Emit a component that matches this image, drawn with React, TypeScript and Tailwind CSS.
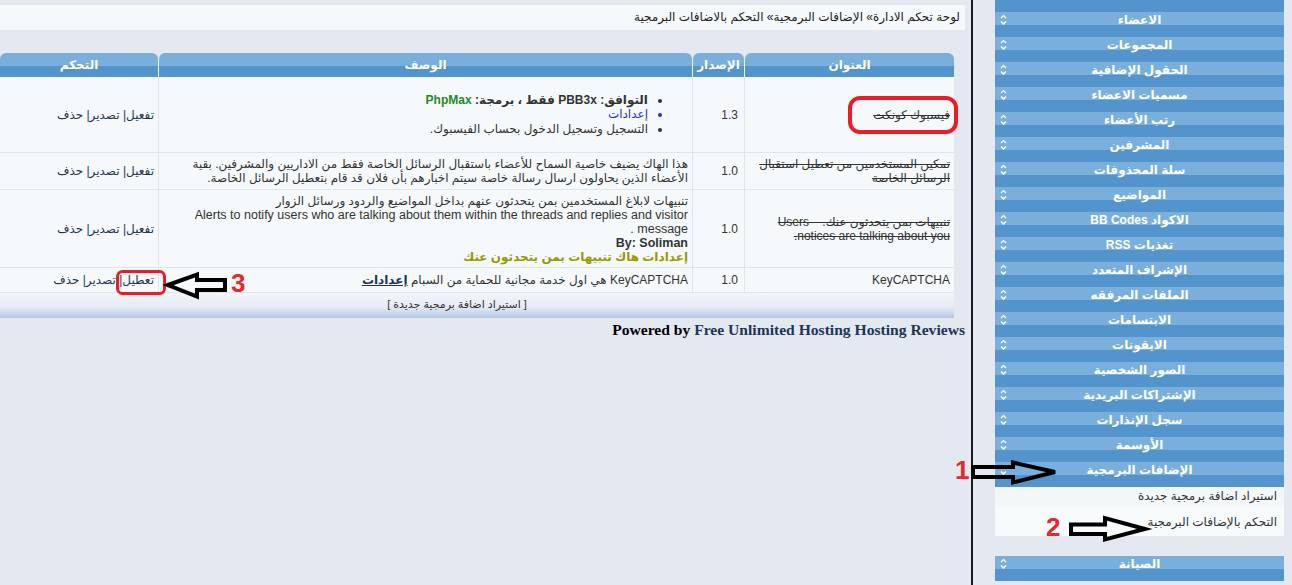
import React from "react";

const Chev = () => (
  <svg width="8" height="12" viewBox="0 0 8 12" className="mt-[2px] shrink-0">
    <path d="M1 4 L3.5 1.5 L6 4" stroke="#fff" strokeWidth="1.1" fill="none" />
    <path d="M1 7.5 L3.5 10 L6 7.5" stroke="#fff" strokeWidth="1.4" fill="none" />
  </svg>
);

const SideItem = ({ label, first }: { label: string; first?: boolean }) => (
  <div
    className={
      "flex h-[25px] bg-[linear-gradient(to_bottom,#7aafdc_0,#7aafdc_13px,#5394cc_13px,#5394cc_100%)] " +
      (first ? "-mt-[13px]" : "")
    }
  >
    <div className="w-[20px] pl-[5px]">
      <Chev />
    </div>
    <div dir="rtl" className="flex-1 pt-[1px] text-center text-[12px] font-bold leading-[14px] text-white">
      {label}
    </div>
    <div className="w-[20px]" />
  </div>
);

const sideItems = [
  "الاعضاء",
  "المجموعات",
  "الحقول الإضافية",
  "مسميات الاعضاء",
  "رتب الأعضاء",
  "المشرفين",
  "سلة المحذوفات",
  "المواضيع",
  "الاكواد BB Codes",
  "تغذيات RSS",
  "الإشراف المتعدد",
  "الملفات المرفقه",
  "الابتسامات",
  "الايقونات",
  "الصور الشخصية",
  "الإشتراكات البريدية",
  "سجل الإنذارات",
  "الأوسمة",
  "الإضافات البرمجية",
];

const Controls = ({ first = "تفعيل" }: { first?: string }) => (
  <div dir="rtl" className="flex h-full items-center px-[4px] text-[#1f3650]">
    <span>{first}</span>
    <span>|&nbsp;</span>
    <span>تصدير</span>
    <span>|&nbsp;</span>
    <span>حذف</span>
  </div>
);

const Cell = ({ children, className = "" }: { children?: React.ReactNode; className?: string }) => (
  <div dir="rtl" className={"flex items-center bg-[#f5f9fb] px-[4px] " + className}>
    {children}
  </div>
);

export default function App() {
  return (
    <div className="relative flex h-[585px] w-[1292px] overflow-hidden bg-[#e4e8f0] font-['Liberation_Sans','DejaVu_Sans',sans-serif] text-[12px] text-[#333]">
      <main className="w-[971px] shrink-0 pt-[5px]">
        <div dir="rtl" className="mr-[6px] h-[25px] bg-[#f5f9fb] px-[5px] leading-[25px] text-[#222]">
          لوحة تحكم الادارة» الإضافات البرمجية» التحكم بالاضافات البرمجية
        </div>

        <div className="mt-[23px] w-[954px]">
          <div className="grid grid-cols-[158px_533px_51px_209px] gap-px bg-[linear-gradient(to_bottom,transparent_6px,#eef3f8_6px)]">
            {["التحكم", "الوصف", "الإصدار", "العنوان"].map((h) => (
              <div
                key={h}
                dir="rtl"
                className="h-[24px] rounded-t-[6px] bg-[linear-gradient(to_bottom,#7aafdc_0,#7aafdc_13px,#5394cc_13px,#5394cc_100%)] text-center text-[12px] font-bold leading-[24px] text-white"
              >
                {h}
              </div>
            ))}
          </div>

          <div className="grid grid-cols-[158px_533px_51px_209px] grid-rows-[75px_36px_77px_24px] gap-px border-b border-[#dfe5ec] bg-[#dfe5ec]">
            {/* row 1 */}
            <Cell className="!px-0">
              <Controls />
            </Cell>
            <Cell>
              <ul className="list-disc pr-[40px] leading-[14.5px]">
                <li className="font-bold">
                  التوافق: PBB3x فقط ، برمجة: <span className="text-[#1f8a1f]">PhpMax</span>
                </li>
                <li className="text-[#2b2bd9]">إعدادات</li>
                <li>التسجيل وتسجيل الدخول بحساب الفيسبوك.</li>
              </ul>
            </Cell>
            <Cell className="!px-[6px]">1.3</Cell>
            <Cell>
              <span className="line-through">فيسبوك كونكت</span>
            </Cell>

            {/* row 2 */}
            <Cell className="!px-0">
              <Controls />
            </Cell>
            <Cell className="leading-[14px]">
              <div>
                <div className="whitespace-nowrap">
                  هذا الهاك يضيف خاصية السماح للأعضاء باستقبال الرسائل الخاصة فقط من الاداريين والمشرفين. بقية
                </div>
                <div className="whitespace-nowrap">
                  الأعضاء الذين يحاولون ارسال رسالة خاصة سيتم اخبارهم بأن فلان قد قام بتعطيل الرسائل الخاصة.
                </div>
              </div>
            </Cell>
            <Cell className="!px-[6px]">1.0</Cell>
            <Cell className="leading-[14px]">
              <div className="line-through">
                <div>تمكين المستخدمين من تعطيل استقبال</div>
                <div>الرسائل الخاصة</div>
              </div>
            </Cell>

            {/* row 3 */}
            <Cell className="!px-0">
              <Controls />
            </Cell>
            <Cell className="leading-[14px]">
              <div>
                <div className="whitespace-nowrap">
                  تنبيهات لابلاغ المستخدمين بمن يتحدثون عنهم بداخل المواضيع والردود ورسائل الزوار
                </div>
                <div className="whitespace-nowrap text-[12.5px]">
                  Alerts to notify users who are talking about them within the threads and replies and visitor
                </div>
                <div className="text-[12.5px]">message .</div>
                <div className="text-[12.5px] font-bold">By: Soliman</div>
                <div className="font-bold text-[#999900]">إعدادات هاك تنبيهات بمن يتحدثون عنك</div>
              </div>
            </Cell>
            <Cell className="!px-[6px]">1.0</Cell>
            <Cell className="leading-[14px]">
              <div className="line-through">
                <div>تنبيهات بمن يتحدثون عنك. &nbsp;&nbsp; Users</div>
                <div>notices are talking about you.</div>
              </div>
            </Cell>

            {/* row 4 */}
            <Cell className="!px-0">
              <Controls first="تعطيل" />
            </Cell>
            <Cell>
              <span>
                KeyCAPTCHA هي اول خدمة مجانية للحماية من السبام{" "}
                <span className="font-bold text-[#1c3657] underline">إعدادات</span>
              </span>
            </Cell>
            <Cell className="!px-[6px]">1.0</Cell>
            <Cell>KeyCAPTCHA</Cell>
          </div>

          <div
            dir="rtl"
            className="h-[25px] bg-[linear-gradient(to_bottom,#f3f6fa_0%,#e6ecf4_55%,#b4c9e6_100%)] pr-[40px] text-center text-[11px] leading-[23px] text-[#333]"
          >
            [ استيراد اضافة برمجية جديدة ]
          </div>
        </div>

        <div className="mr-[6px] mt-[3px] text-right font-['Liberation_Serif',serif] text-[15.6px] font-bold leading-[18px] text-[#1d3557]">
          <span className="text-black">Powered by </span>Free Unlimited Hosting Hosting Reviews
        </div>
      </main>

      <div className="w-[2px] shrink-0 bg-[#1a1a1a]" />

      <aside className="w-[319px] shrink-0 pl-[22px] pr-[8px]">
        <SideItem label="" first />
        {sideItems.map((s) => (
          <SideItem key={s} label={s} />
        ))}
        <div dir="rtl" className="h-[20px] bg-[#f3f7fa] pr-[7px] leading-[18px] text-[#333]">
          استيراد اضافة برمجية جديدة
        </div>
        <div dir="rtl" className="h-[29px] bg-[#f8fbfc] pr-[7px] pt-[7px] leading-[16px] text-[#333]">
          التحكم بالإضافات البرمجية
        </div>
        <div className="h-[20px]" />
        <SideItem label="الصيانة" />
      </aside>

      <svg className="pointer-events-none absolute left-0 top-0" width="1292" height="585" viewBox="0 0 1292 585">
        <rect x="850" y="98" width="106" height="34" rx="10" fill="none" stroke="#ec1c24" strokeWidth="4" />
        <rect x="117.5" y="271.5" width="47" height="22" rx="5" fill="none" stroke="#ec1c24" strokeWidth="3" />
        <polygon
          points="168,285 197,274.5 197,280 225,280 225,290 197,290 197,296.5"
          fill="none"
          stroke="#000"
          strokeWidth="4"
          strokeLinejoin="miter"
        />
        <polygon
          points="973,467 1013,467 1013,462.5 1055,472 1013,482.5 1013,477 973,477"
          fill="none"
          stroke="#000"
          strokeWidth="4"
        />
        <polygon
          points="1071,524.5 1105,524.5 1105,518 1145,529 1105,539.5 1105,534 1071,534"
          fill="none"
          stroke="#000"
          strokeWidth="4"
        />
      </svg>
      <span className="absolute left-[231px] top-[270px] font-['Liberation_Sans',sans-serif] text-[26px] font-bold leading-none text-[#e8262c]">
        3
      </span>
      <span className="absolute left-[955px] top-[457px] font-['Liberation_Sans',sans-serif] text-[26px] font-bold leading-none text-[#e8262c]">
        1
      </span>
      <span className="absolute left-[1046px] top-[514px] font-['Liberation_Sans',sans-serif] text-[26px] font-bold leading-none text-[#e8262c]">
        2
      </span>
    </div>
  );
}
